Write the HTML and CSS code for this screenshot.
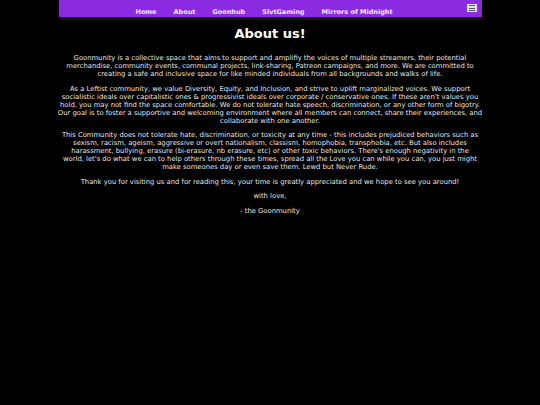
FILE: index.html
```html
<!DOCTYPE html>
<html>
<head>
<meta charset="utf-8">
<link rel="stylesheet" href="styles.css">
</head>
<body>
<nav class="nav">
  <ul class="links">
    <li><a href="#">Home</a></li>
    <li><a href="#">About</a></li>
    <li><a href="#">Goonhub</a></li>
    <li><a href="#">SlvtGaming</a></li>
    <li><a href="#">Mirrors of Midnight</a></li>
  </ul>
  <button class="menu" aria-label="menu"><span></span><span></span><span></span></button>
</nav>
<main class="content">
  <h1 class="title">About us!</h1>
  <p>Goonmunity is a collective space that aims to support and amplifiy the voices of multiple streamers, their potential merchandise, community events, communal projects, link-sharing, Patreon campaigns, and more. We are committed to creating a safe and inclusive space for like minded individuals from all backgrounds and walks of life.</p>
  <p>As a Leftist community, we value Diversity, Equity, and Inclusion, and strive to uplift marginalized voices. We support socialistic ideals over capitalistic ones &amp; progressivist ideals over corporate / conservative ones. If these aren't values you hold, you may not find the space comfortable. We do not tolerate hate speech, discrimination, or any other form of bigotry. Our goal is to foster a supportive and welcoming environment where all members can connect, share their experiences, and collaborate with one another.</p>
  <p>This Community does not tolerate hate, discrimination, or toxicity at any time - this includes prejudiced behaviors such as sexism, racism, ageism, aggressive or overt nationalism, classism, homophobia, transphobia, etc. But also includes harassment, bullying, erasure (bi-erasure, nb erasure, etc) or other toxic behaviors. There's enough negativity in the<br>world, let's do what we can to help others through these times, spread all the Love you can while you can, you just might make someones day or even save them. Lewd but Never Rude.</p>
  <p>Thank you for visiting us and for reading this, your time is greatly appreciated and we hope to see you around!</p>
  <p>with love,</p>
  <p>- the Goonmunity</p>
</main>
</body>
</html>
```
FILE: styles.css
```css
html, body {
  margin: 0;
  padding: 0;
  background: #000;
  color: #e6e6e6;
  font-family: "DejaVu Sans", Verdana, sans-serif;
}
.nav {
  width: 423px;
  height: 17px;
  margin: 0 auto;
  background: #8a2be2;
  box-shadow: 0 2px 4px rgba(60, 60, 60, 0.6);
  display: flex;
  align-items: center;
  justify-content: center;
  position: relative;
}
.links {
  list-style: none;
  margin: 0;
  padding: 0 12px 0 0;
  display: flex;
  gap: 17px;
}
.links a {
  color: #f2e8fb;
  text-decoration: none;
  font-family: "DejaVu Sans", sans-serif;
  font-weight: bold;
  font-size: 6.5px;
}
.menu {
  position: absolute;
  right: 5px;
  top: 4px;
  width: 10px;
  height: 8px;
  padding: 1px 2px;
  border: none;
  background: #e8e0f0;
  display: flex;
  flex-direction: column;
  justify-content: space-between;
  align-items: stretch;
}
.menu span {
  display: block;
  height: 1px;
  background: #555;
}
.content {
  width: 425px;
  margin: 0 auto;
  text-align: center;
  padding-top: 8px;
}
.title {
  font-size: 13px;
  font-weight: bold;
  color: #fff;
  margin: 0 0 11px;
  line-height: 18px;
}
.content p {
  font-size: 6.8px;
  line-height: 8px;
  margin: 0 0 6.5px;
}
```
